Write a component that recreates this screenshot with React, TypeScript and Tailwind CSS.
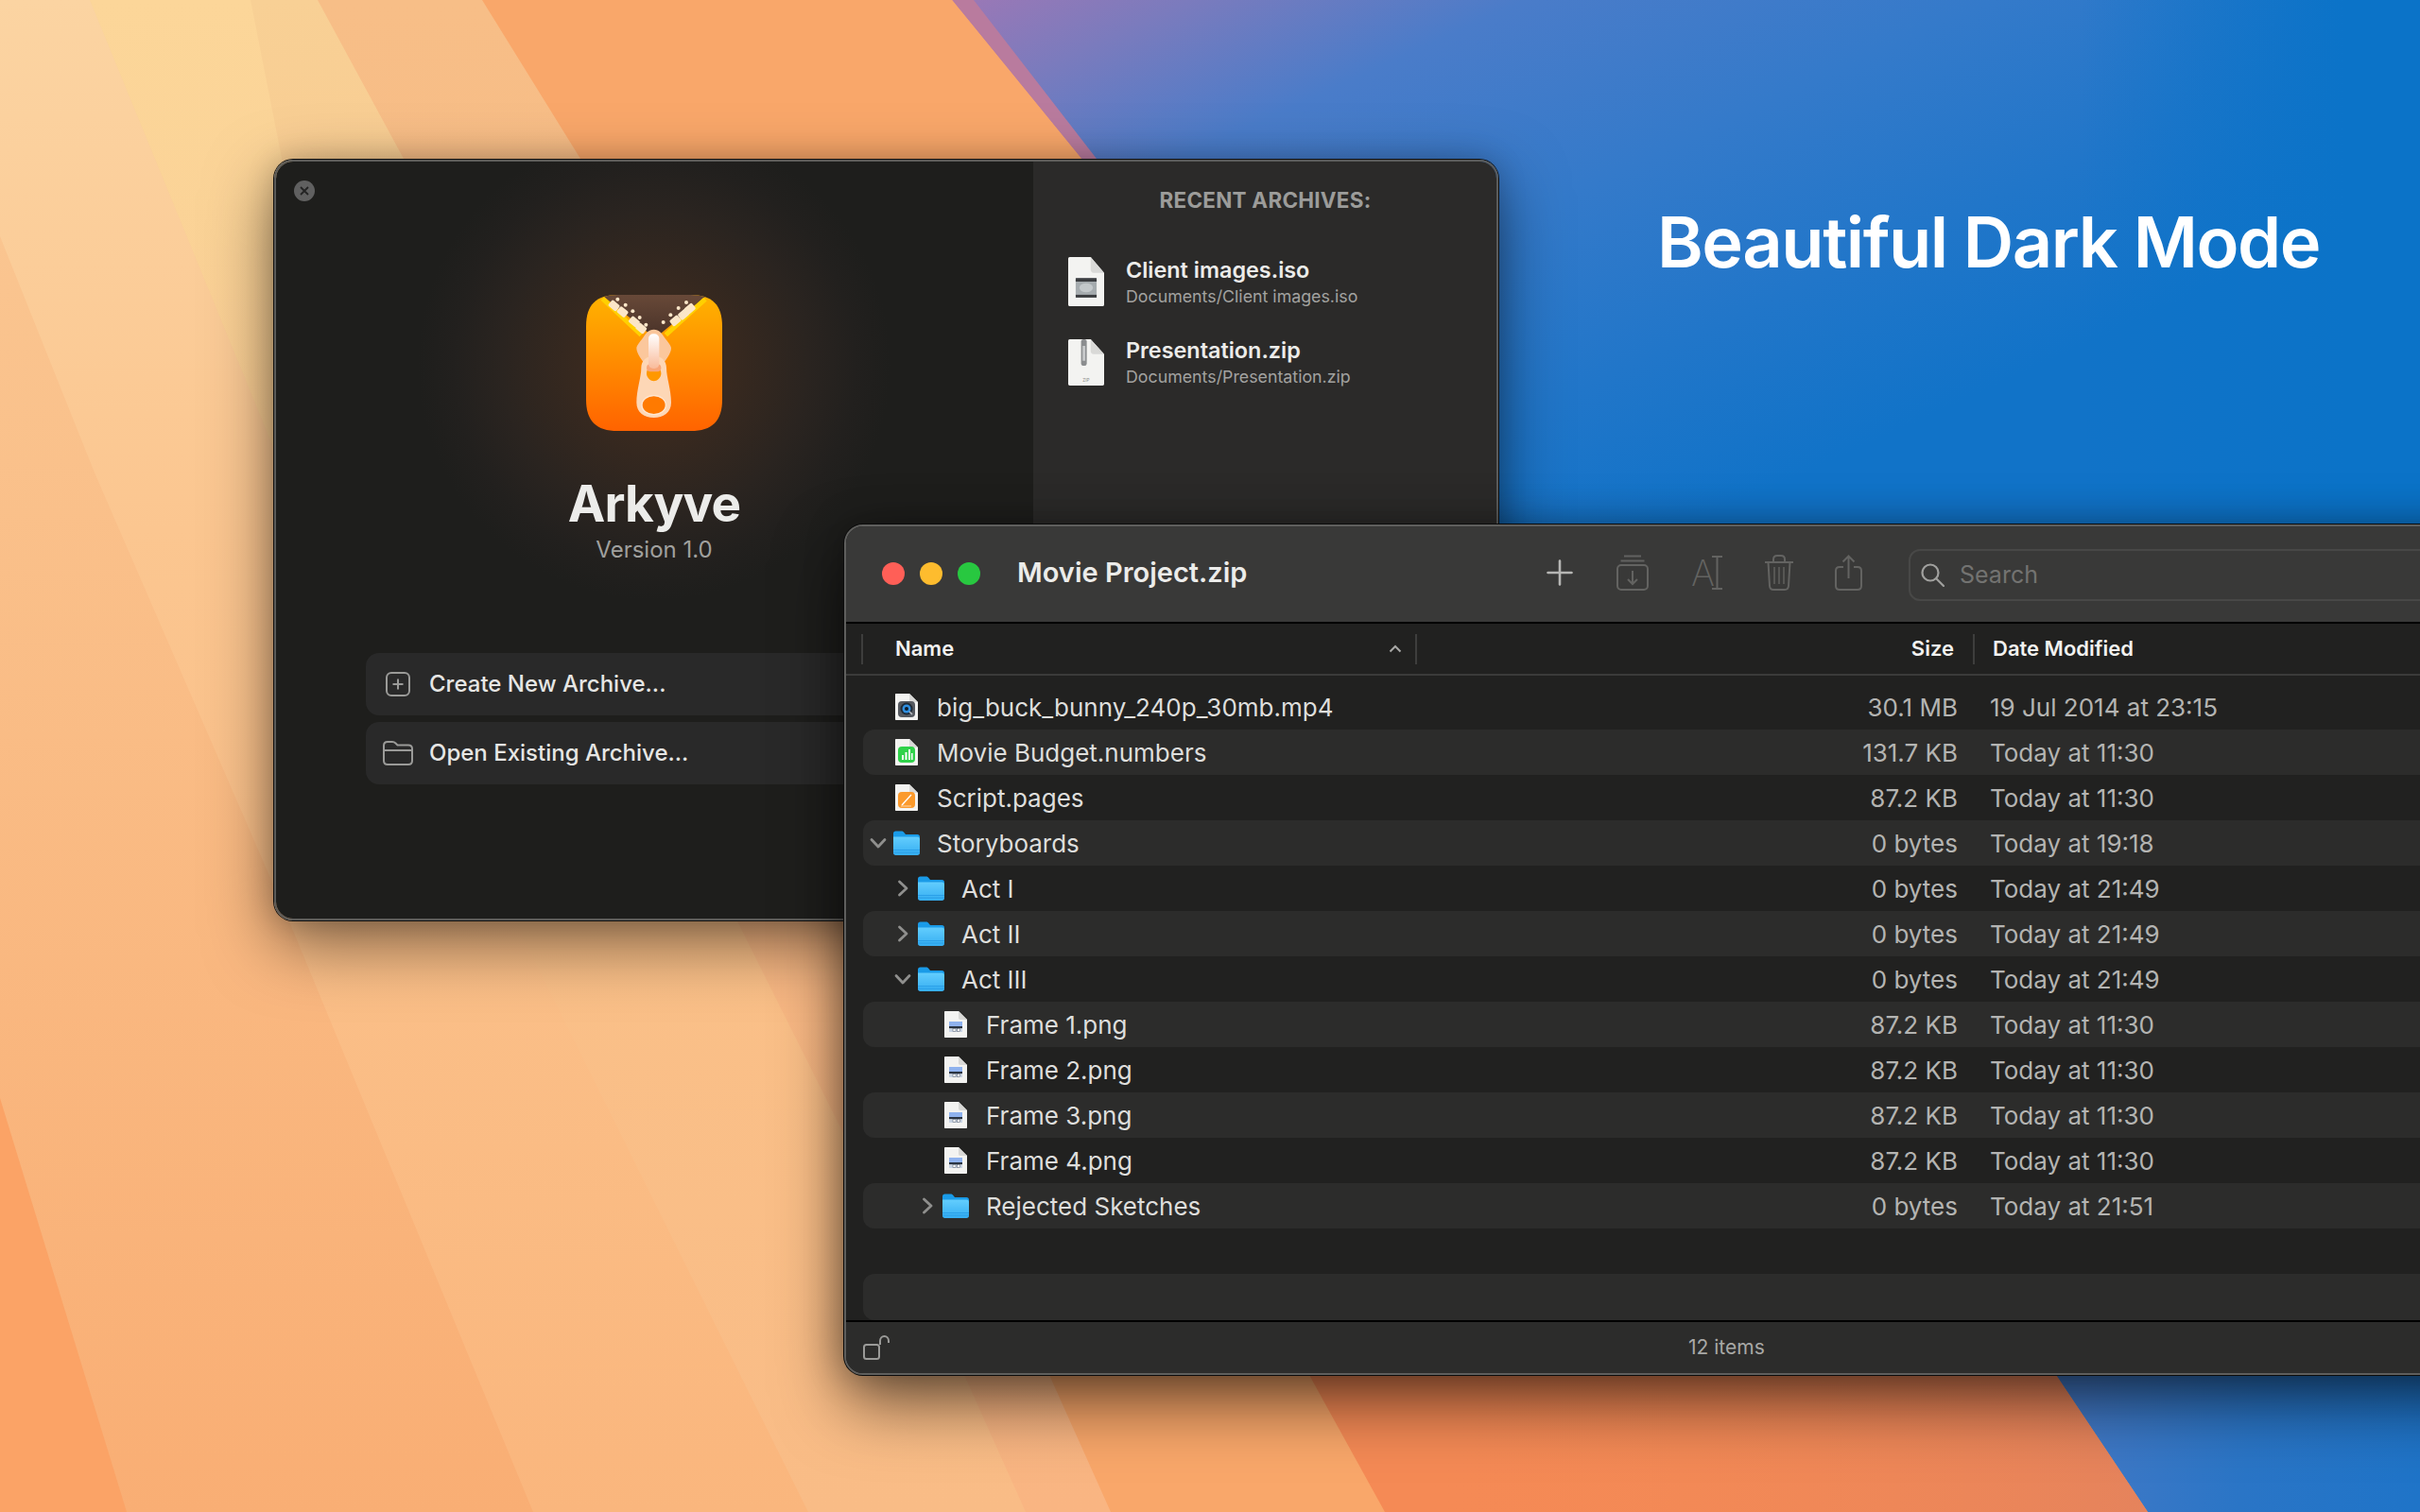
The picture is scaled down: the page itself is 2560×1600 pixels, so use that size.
import type { ReactNode } from 'react';

type Row = {
    name: string;
    size: string;
    date: string;
    kind: 'mp4' | 'numbers' | 'pages' | 'png' | 'folder';
    indent: string;
    open?: boolean;
};

const rows: Row[] = [
    { name: 'big_buck_bunny_240p_30mb.mp4', size: '30.1 MB', date: '19 Jul 2014 at 23:15', kind: 'mp4', indent: 'pl-[34px]' },
    { name: 'Movie Budget.numbers', size: '131.7 KB', date: 'Today at 11:30', kind: 'numbers', indent: 'pl-[34px]' },
    { name: 'Script.pages', size: '87.2 KB', date: 'Today at 11:30', kind: 'pages', indent: 'pl-[34px]' },
    { name: 'Storyboards', size: '0 bytes', date: 'Today at 19:18', kind: 'folder', indent: 'pl-[6px]', open: true },
    { name: 'Act I', size: '0 bytes', date: 'Today at 21:49', kind: 'folder', indent: 'pl-[32px]' },
    { name: 'Act II', size: '0 bytes', date: 'Today at 21:49', kind: 'folder', indent: 'pl-[32px]' },
    { name: 'Act III', size: '0 bytes', date: 'Today at 21:49', kind: 'folder', indent: 'pl-[32px]', open: true },
    { name: 'Frame 1.png', size: '87.2 KB', date: 'Today at 11:30', kind: 'png', indent: 'pl-[86px]' },
    { name: 'Frame 2.png', size: '87.2 KB', date: 'Today at 11:30', kind: 'png', indent: 'pl-[86px]' },
    { name: 'Frame 3.png', size: '87.2 KB', date: 'Today at 11:30', kind: 'png', indent: 'pl-[86px]' },
    { name: 'Frame 4.png', size: '87.2 KB', date: 'Today at 11:30', kind: 'png', indent: 'pl-[86px]' },
    { name: 'Rejected Sketches', size: '0 bytes', date: 'Today at 21:51', kind: 'folder', indent: 'pl-[58px]' },
];

function Wallpaper() {
    return (
        <svg className="absolute inset-0" width="2560" height="1600" viewBox="0 0 2560 1600">
            <defs>
                <linearGradient id="blue" gradientUnits="userSpaceOnUse" x1="1020" y1="0" x2="1365" y2="751">
                    <stop offset="0" stopColor="#9a78b6" />
                    <stop offset="0.12" stopColor="#7b7bbd" />
                    <stop offset="0.3" stopColor="#4a7cc9" />
                    <stop offset="0.55" stopColor="#347aca" />
                    <stop offset="0.78" stopColor="#2176c9" />
                    <stop offset="1" stopColor="#1173c8" />
                </linearGradient>
                <linearGradient id="blueRight" gradientUnits="userSpaceOnUse" x1="2200" y1="0" x2="2480" y2="0">
                    <stop offset="0" stopColor="#0b73c8" stopOpacity="0" />
                    <stop offset="1" stopColor="#0b73c8" />
                </linearGradient>
                <linearGradient id="wedge" gradientUnits="userSpaceOnUse" x1="2200" y1="1500" x2="2560" y2="1560">
                    <stop offset="0" stopColor="#4279c6" />
                    <stop offset="0.5" stopColor="#2a75c6" />
                    <stop offset="1" stopColor="#1f74c8" />
                </linearGradient>
                <linearGradient id="deep" gradientUnits="userSpaceOnUse" x1="0" y1="168" x2="0" y2="1400">
                    <stop offset="0" stopColor="#f8a86c" />
                    <stop offset="1" stopColor="#f58a55" />
                </linearGradient>
                <linearGradient id="deepRight" gradientUnits="userSpaceOnUse" x1="1500" y1="0" x2="2270" y2="0">
                    <stop offset="0" stopColor="#f58a55" stopOpacity="0" />
                    <stop offset="1" stopColor="#e5835c" />
                </linearGradient>
                <linearGradient id="band4" gradientUnits="userSpaceOnUse" x1="0" y1="0" x2="0" y2="1600">
                    <stop offset="0" stopColor="#f7be87" />
                    <stop offset="1" stopColor="#f9b582" />
                </linearGradient>
                <linearGradient id="ridge" gradientUnits="userSpaceOnUse" x1="0" y1="0" x2="0" y2="1600">
                    <stop offset="0" stopColor="#f8d095" />
                    <stop offset="0.6" stopColor="#fac088" />
                    <stop offset="1" stopColor="#f9bc86" />
                </linearGradient>
                <linearGradient id="ridgeTop" gradientUnits="userSpaceOnUse" x1="0" y1="0" x2="0" y2="700">
                    <stop offset="0" stopColor="#fcd699" />
                    <stop offset="1" stopColor="#fcd699" stopOpacity="0" />
                </linearGradient>
                <linearGradient id="left" gradientUnits="userSpaceOnUse" x1="0" y1="0" x2="0" y2="1600">
                    <stop offset="0" stopColor="#fbd4a2" />
                    <stop offset="0.35" stopColor="#fbc690" />
                    <stop offset="1" stopColor="#fab67d" />
                </linearGradient>
                <linearGradient id="left2" gradientUnits="userSpaceOnUse" x1="0" y1="250" x2="0" y2="1600">
                    <stop offset="0" stopColor="#fac590" />
                    <stop offset="1" stopColor="#f9ae74" />
                </linearGradient>
            </defs>
            <rect width="2560" height="1600" fill="url(#blue)" />
            <rect x="2200" width="360" height="1300" fill="url(#blueRight)" />
            <polygon points="2560,1300 2000,1300 2000,1600 2560,1600" fill="url(#wedge)" />
            <polygon points="0,0 1030,0 1160,168 2070,1300 0,1300" fill="#b97b9e" />
            <polygon points="0,0 1007,0 1144,168 2051,1300 2175,1455 2272,1600 0,1600" fill="url(#deep)" />
            <polygon points="1300,1300 2051,1300 2175,1455 2272,1600 1300,1600" fill="url(#deepRight)" />
            <polygon points="0,0 1007,0 1144,168 1385,1455 1465,1600 0,1600" fill="#f9a76a" />
            <polygon points="0,0 510,0 614,168 1110,1455 1175,1600 0,1600" fill="url(#band4)" />
            <polygon points="0,0 336,0 427,168 780,975 1020,1455 1085,1600 0,1600" fill="url(#ridge)" />
            <polygon points="95,0 265,0 344,400 500,800 300,500" fill="url(#ridgeTop)" />
            <polygon points="0,0 95,0 300,500 545,975 855,1600 0,1600" fill="url(#left)" />
            <polygon points="0,250 100,500 306,975 564,1600 0,1600" fill="url(#left2)" />
            <polygon points="0,1162 134,1600 0,1600" fill="#fba366" />
        </svg>
    );
}

function AppIcon() {
    const squircle = 'M130 38H362C430 38 462 70 462 138V370C462 438 430 470 362 470H130C62 470 30 438 30 370V138C30 70 62 38 130 38Z';
    return (
        <svg width="144" height="144" viewBox="30 38 432 432">
            <defs>
                <linearGradient id="appFill" x1="0" y1="0" x2="0" y2="1">
                    <stop offset="0" stopColor="#ffb300" />
                    <stop offset="1" stopColor="#ff6300" />
                </linearGradient>
                <linearGradient id="appTop" x1="0" y1="0" x2="0" y2="1">
                    <stop offset="0" stopColor="#6a4a39" />
                    <stop offset="1" stopColor="#4a3329" />
                </linearGradient>
                <linearGradient id="appHandle" x1="0" y1="0" x2="0" y2="1">
                    <stop offset="0" stopColor="#ffffff" />
                    <stop offset="1" stopColor="#f9bb9a" />
                </linearGradient>
                <clipPath id="appClip">
                    <path d={squircle} />
                </clipPath>
            </defs>
            <path d={squircle} fill="url(#appFill)" />
            <g clipPath="url(#appClip)">
                <polygon points="70,30 235,165 262,165 425,30" fill="url(#appTop)" />
                <path d="M82 50L205 165M408 52L283 165" stroke="#ffd000" strokeWidth="15" />
                <g fill="#fbe6c8">
                    <rect x="102" y="60" width="32" height="24" rx="5" transform="rotate(40 118 73)" />
                    <rect x="129" y="80" width="32" height="24" rx="5" transform="rotate(40 145 93)" />
                    <rect x="166" y="111" width="32" height="24" rx="5" transform="rotate(40 182 124)" />
                    <rect x="188" y="132" width="32" height="24" rx="5" transform="rotate(40 204 145)" />
                    <rect x="344" y="70" width="32" height="24" rx="5" transform="rotate(-40 360 83)" />
                    <rect x="324" y="88" width="32" height="24" rx="5" transform="rotate(-40 340 101)" />
                    <rect x="298" y="108" width="32" height="24" rx="5" transform="rotate(-40 314 121)" />
                    <circle cx="130" cy="52" r="6" />
                    <circle cx="155" cy="70" r="6" />
                    <circle cx="178" cy="90" r="6" />
                    <circle cx="200" cy="110" r="6" />
                    <circle cx="220" cy="133" r="6" />
                    <circle cx="348" cy="62" r="6" />
                    <circle cx="323" cy="80" r="6" />
                    <circle cx="298" cy="102" r="6" />
                    <circle cx="275" cy="125" r="6" />
                </g>
            </g>
            <path d="M245 148C262 148 270 160 278 172C292 190 300 200 300 207C300 225 285 240 272 262H218C205 240 190 225 190 207C190 200 198 190 212 172C220 160 228 148 245 148Z" fill="#fbc79c" />
            <path d="M245 232C270 232 285 248 285 270C285 300 300 340 300 380C300 412 275 428 245 428C215 428 190 412 190 380C190 340 205 300 205 270C205 248 220 232 245 232Z" fill="#fdd7b6" />
            <path d="M245 265C258 265 268 272 268 288C268 302 255 312 245 312C235 312 222 302 222 288C222 272 232 265 245 265Z" fill="#ff9800" />
            <ellipse cx="245" cy="388" rx="38" ry="30" fill="#ff7a00" stroke="#ffe7d2" strokeWidth="4" />
            <rect x="222" y="258" width="46" height="24" rx="12" fill="#f8a67a" />
            <rect x="228" y="162" width="34" height="110" rx="15" fill="url(#appHandle)" />
        </svg>
    );
}

function Page({ w, h, children }: { w: number; h: number; children?: ReactNode }) {
    return (
        <svg width={w} height={h} viewBox="0 0 24 28" preserveAspectRatio="none" className="shrink-0">
            <path d="M0 1C0 .4.4 0 1 0H15L24 9V27C24 27.6 23.6 28 23 28H1C.4 28 0 27.6 0 27Z" fill="#f3f3f1" />
            <path d="M15 0L24 9H17C15.8 9 15 8.2 15 7Z" fill="#d9d9d7" />
            {children}
        </svg>
    );
}

function FileIcon({ kind }: { kind: Row['kind'] }) {
    if (kind === 'mp4') {
        return (
            <Page w={24} h={28}>
                <rect x="3" y="8" width="18" height="17" rx="4" fill="#55595f" />
                <circle cx="12" cy="16" r="6.5" fill="#1f2a36" />
                <circle cx="12" cy="16" r="4.5" fill="#2f8fe0" />
                <circle cx="12" cy="16" r="2" fill="#0f1b28" />
                <path d="M15 19l3 3" stroke="#b8bcc2" strokeWidth="1.6" />
            </Page>
        );
    }
    if (kind === 'numbers') {
        return (
            <Page w={24} h={28}>
                <rect x="3" y="8" width="18" height="17" rx="4" fill="#2fd24a" />
                <path d="M7 17h2v5H7zM10.5 14h2v8h-2zM14 11h2v11h-2zM17 15h1.5v7H17z" fill="#fff" />
            </Page>
        );
    }
    if (kind === 'pages') {
        return (
            <Page w={24} h={28}>
                <rect x="3" y="8" width="18" height="17" rx="4" fill="#fb9a2c" />
                <path d="M7 22L17 11" stroke="#fff" strokeWidth="1.4" />
                <path d="M6 23h11" stroke="#ffd9ad" strokeWidth="1" />
            </Page>
        );
    }
    return (
        <Page w={24} h={28}>
            <rect x="5" y="11" width="14" height="6" fill="#8fb2ee" />
            <rect x="5" y="16" width="14" height="2.4" fill="#2a3442" />
            <rect x="5" y="18.4" width="14" height="3.6" fill="#c9d4e4" />
            <rect x="9" y="18.5" width="3" height="3" fill="#f7f7f7" stroke="#4a5566" strokeWidth=".5" />
            <rect x="13.5" y="18.5" width="3" height="3" fill="#f7f7f7" stroke="#4a5566" strokeWidth=".5" />
        </Page>
    );
}

function FolderIcon() {
    return (
        <svg width="28" height="26" viewBox="0 0 28 26" className="shrink-0">
            <defs>
                <linearGradient id="folderBody" x1="0" y1="0" x2="0" y2="1">
                    <stop offset="0" stopColor="#63cdfd" />
                    <stop offset="1" stopColor="#35aef2" />
                </linearGradient>
            </defs>
            <path d="M0 3C0 1.4 1 .5 2.5 .5H8.5C10 .5 10.8 1.2 11.6 2.2L13 4H25.5C27 4 28 5 28 6.5V10H0Z" fill="#1a9be8" />
            <path d="M0 6.5H25.5C27 6.5 28 7.5 28 9V23.5C28 25 27 26 25.5 26H2.5C1 26 0 25 0 23.5Z" fill="url(#folderBody)" />
            <path d="M0 20.5H28M0 23H28" stroke="#1f95e2" strokeWidth=".7" />
        </svg>
    );
}

function Chevron({ open }: { open?: boolean }) {
    return (
        <svg width="20" height="20" viewBox="0 0 20 20" className="shrink-0">
            <path
                d={open ? 'M3 6.5L10 14L17 6.5' : 'M6.5 3L14 10L6.5 17'}
                fill="none"
                stroke="#8f8f8d"
                strokeWidth="2.8"
                strokeLinecap="round"
                strokeLinejoin="round"
            />
        </svg>
    );
}

function ListRow({ row, striped }: { row: Row; striped: boolean }) {
    return (
        <div className={`flex h-[48px] items-center rounded-[12px] ${striped ? 'bg-[#2c2c2b]' : ''}`}>
            <div className={`flex w-[584px] items-center ${row.indent}`}>
                {row.kind === 'folder' ? (
                    <>
                        <Chevron open={row.open} />
                        <span className="ml-[6px]">
                            <FolderIcon />
                        </span>
                        <span className="ml-[18px]">{row.name}</span>
                    </>
                ) : (
                    <>
                        <FileIcon kind={row.kind} />
                        <span className="ml-[20px]">{row.name}</span>
                    </>
                )}
            </div>
            <div className="w-[574px] text-right text-[#b4b4b2]">{row.size}</div>
            <div className="ml-[34px] text-[#b4b4b2]">{row.date}</div>
        </div>
    );
}

function RecentItem({ title, path, icon }: { title: string; path: string; icon: ReactNode }) {
    return (
        <div className="flex h-[52px] items-center">
            {icon}
            <div className="ml-[23px] flex flex-col">
                <span className="text-[23.4px] leading-[30px] font-semibold text-[#ececea]">{title}</span>
                <span className="text-[17.8px] leading-[25px] text-[#a2a2a0]">{path}</span>
            </div>
        </div>
    );
}

function ActionButton({ icon, label }: { icon: ReactNode; label: string }) {
    return (
        <div className="flex h-[66px] items-center rounded-[14px] bg-[#292929]">
            <span className="flex w-[67px] justify-center">{icon}</span>
            <span className="text-[24px] font-medium text-[#e6e6e4]">{label}</span>
        </div>
    );
}

function WelcomeWindow() {
    return (
        <div className="absolute top-[169px] left-[290px] flex h-[805px] w-[1295px] overflow-hidden rounded-[20px] border-2 border-[#5b5b59] shadow-[0_0_0_1px_#111,0_24px_70px_rgba(0,0,0,0.5),0_0_30px_rgba(0,0,0,0.18)]">
            <div className="relative flex w-[801px] flex-col items-center bg-[#1e1e1c] pt-[141px]">
                <div className="absolute top-[-36px] left-[150px] h-[500px] w-[500px] bg-[radial-gradient(circle_closest-side,#3d2c20_0%,#38291f_32%,#2a2420_65%,#22201e_85%,rgba(30,30,28,0)_100%)]" />
                <div className="absolute top-[20px] left-[19px] flex h-[22px] w-[22px] items-center justify-center rounded-full bg-[#606060]">
                    <svg width="12" height="12" viewBox="0 0 12 12">
                        <path d="M2 2L10 10M10 2L2 10" stroke="#232323" strokeWidth="1.8" />
                    </svg>
                </div>
                <div className="relative flex flex-col items-center pr-[1px]">
                    <AppIcon />
                    <div className="mt-[44px] text-[53px] leading-[66px] font-bold tracking-[-0.015em] text-[#ececea]">Arkyve</div>
                    <div className="text-[24px] leading-[32px] text-[#a0a09e]">Version 1.0</div>
                </div>
                <div className="relative mt-[93px] flex flex-col gap-[7px] self-stretch pr-[96px] pl-[95px]">
                    <ActionButton
                        label="Create New Archive..."
                        icon={
                            <svg width="26" height="26" viewBox="0 0 26 26" fill="none" stroke="#9a9a98" strokeWidth="2">
                                <rect x="1" y="1" width="24" height="24" rx="5" />
                                <path d="M13 7.5V18.5M7.5 13H18.5" />
                            </svg>
                        }
                    />
                    <ActionButton
                        label="Open Existing Archive..."
                        icon={
                            <svg width="32" height="26" viewBox="0 0 32 26" fill="none" stroke="#9a9a98" strokeWidth="2">
                                <path d="M1 5C1 2.5 2.5 1 5 1H10C11.5 1 12.5 1.5 13.5 2.5L15.5 4.5H27C29.5 4.5 31 6 31 8.5V21C31 23.5 29.5 25 27 25H5C2.5 25 1 23.5 1 21Z" />
                                <path d="M1 10H31" />
                            </svg>
                        }
                    />
                </div>
            </div>
            <div className="flex flex-1 flex-col bg-[#2b2a29] pl-[37px]">
                <div className="mt-[27px] w-[417px] text-center text-[22.5px] leading-[28px] font-bold tracking-[0.01em] text-[#9c9c9a]">
                    RECENT ARCHIVES:
                </div>
                <div className="mt-[46px] flex flex-col gap-[33px]">
                    <RecentItem
                        title="Client images.iso"
                        path="Documents/Client images.iso"
                        icon={
                            <Page w={38} h={52}>
                                <rect x="5" y="12" width="14" height="11" rx="1" fill="#a5abae" />
                                <rect x="5" y="12" width="14" height="2" fill="#3b3d40" />
                                <rect x="5" y="21.5" width="14" height="1.6" fill="#3b3d40" />
                                <ellipse cx="12" cy="17.5" rx="4.5" ry="2.6" fill="#c3c8ca" />
                            </Page>
                        }
                    />
                    <RecentItem
                        title="Presentation.zip"
                        path="Documents/Presentation.zip"
                        icon={
                            <Page w={38} h={49}>
                                <rect x="8.6" y="0" width="3.8" height="16" rx="1.6" fill="#8b8d8f" />
                                <rect x="9.6" y="4" width="1.8" height="9" fill="#c7c9ca" />
                                <text x="12" y="26" textAnchor="middle" fontSize="3" fill="#8a8a88" fontFamily="Inter, sans-serif">
                                    ZIP
                                </text>
                            </Page>
                        }
                    />
                </div>
            </div>
        </div>
    );
}

function Toolbar() {
    const dim = '#636361';
    return (
        <div className="flex shrink-0 items-center pb-[2px]">
            <svg width="28" height="28" viewBox="0 0 28 28" stroke="#b6b6b4" strokeWidth="2.6" strokeLinecap="round">
                <path d="M14 1.5V26.5M1.5 14H26.5" />
            </svg>
            <svg width="34" height="38" viewBox="0 0 34 38" fill="none" stroke={dim} strokeWidth="2" className="ml-[46px]">
                <path d="M8 1.5H26M4.5 6.5H29.5" />
                <rect x="1" y="11" width="32" height="26" rx="4" />
                <path d="M17 17V31M12 26L17 31L22 26" />
            </svg>
            <div className="ml-[45px] flex h-[38px] w-[33px] items-center text-[#636361]">
                <span className="w-[22px] text-[38px] leading-[38px] font-extralight">A</span>
                <svg width="11" height="36" viewBox="0 0 11 36" fill="none" stroke={dim} strokeWidth="2">
                    <path d="M0 1H11M0 35H11M5.5 1V35" />
                </svg>
            </div>
            <svg width="32" height="38" viewBox="0 0 32 38" fill="none" stroke={dim} strokeWidth="2" className="ml-[44px]">
                <path d="M1 8H31M10 8V5C10 2.5 11.5 1 14 1H18C20.5 1 22 2.5 22 5V8" />
                <path d="M4.5 8L6 33C6.2 35.5 7.5 37 10 37H22C24.5 37 25.8 35.5 26 33L27.5 8" />
                <path d="M11 13V31M16 13V31M21 13V31" strokeWidth="1.4" />
            </svg>
            <svg width="29" height="38" viewBox="0 0 29 38" fill="none" stroke={dim} strokeWidth="2" className="ml-[43px]">
                <path d="M9 13H5C2.5 13 1 14.5 1 17V33C1 35.5 2.5 37 5 37H24C26.5 37 28 35.5 28 33V17C28 14.5 26.5 13 24 13H20" />
                <path d="M14.5 25V1.5M8.5 7.5L14.5 1.5L20.5 7.5" />
            </svg>
            <div className="mt-[6px] ml-[49px] flex h-[55px] w-[800px] items-center rounded-[12px] border-2 border-[#484847] pl-[11px] text-[25px] text-[#737371]">
                <svg width="25" height="25" viewBox="0 0 25 25" fill="none" stroke="#a0a09e" strokeWidth="2.2" strokeLinecap="round">
                    <circle cx="10" cy="10" r="8.5" />
                    <path d="M16.5 16.5L24 24" />
                </svg>
                <span className="ml-[16px]">Search</span>
            </div>
        </div>
    );
}

function ArchiveWindow() {
    return (
        <div className="absolute top-[555px] left-[893px] flex h-[900px] w-[1800px] flex-col overflow-hidden rounded-[20px] border-2 border-[#5f5f5d] bg-[#212120] shadow-[0_0_0_1px_#0c0c0c,0_30px_70px_rgba(0,0,0,0.55),0_0_40px_rgba(0,0,0,0.3)]">
            <div className="flex h-[103px] shrink-0 items-center border-b-2 border-black bg-[#393938] pb-[2px] pl-[38px]">
                <div className="flex shrink-0 gap-[16px]">
                    <span className="h-[24px] w-[24px] rounded-full bg-[#ff5f57]" />
                    <span className="h-[24px] w-[24px] rounded-full bg-[#febc2e]" />
                    <span className="h-[24px] w-[24px] rounded-full bg-[#28c840]" />
                </div>
                <div className="ml-[39px] w-[560px] shrink-0 pb-[2px] text-[29px] font-semibold text-[#ececea]">Movie Project.zip</div>
                <Toolbar />
            </div>
            <div className="flex h-[55px] shrink-0 items-center border-b-2 border-[#3b3b3a] pl-[16px] text-[22px] font-semibold text-[#f2f2f0]">
                <span className="h-[32px] w-[2px] bg-[#3e3e3d]" />
                <div className="flex w-[584px] items-center justify-between pr-[14px] pl-[34px]">
                    <span>Name</span>
                    <svg width="14" height="9" viewBox="0 0 14 9" fill="none" stroke="#a8a8a6" strokeWidth="2">
                        <path d="M1.5 7.5L7 2L12.5 7.5" />
                    </svg>
                </div>
                <span className="h-[32px] w-[2px] bg-[#3e3e3d]" />
                <div className="w-[568px] text-right">Size</div>
                <span className="ml-[20px] h-[32px] w-[2px] bg-[#3e3e3d]" />
                <div className="ml-[19px]">Date Modified</div>
            </div>
            <div className="flex-1 pt-[9px] pl-[18px] text-[26px] text-[#dededc]">
                {rows.map((row, i) => (
                    <ListRow key={row.name} row={row} striped={i % 2 === 1} />
                ))}
                <div className="h-[48px]" />
                <div className="h-[49px] rounded-[12px] bg-[#2c2c2b]" />
            </div>
            <div className="relative flex h-[56px] shrink-0 items-center border-t-2 border-black bg-[#2c2c2b] pl-[18px]">
                <svg width="28" height="26" viewBox="0 0 28 26" fill="none" stroke="#9a9a98" strokeWidth="2">
                    <rect x="1" y="10" width="16" height="15" rx="2.5" />
                    <path d="M18 10V6C18 3 20 1 22.5 1C25 1 27 3 27 6V8" />
                </svg>
                <span className="ml-[845px] text-[21px] text-[#a8a8a6]">12 items</span>
            </div>
        </div>
    );
}

export default function App() {
    return (
        <div className="relative h-[1600px] w-[2560px] overflow-hidden font-['Inter',sans-serif]">
            <Wallpaper />
            <WelcomeWindow />
            <ArchiveWindow />
            <div className="absolute top-[210px] left-[1753px] text-[74px] leading-[92px] font-semibold tracking-[-0.02em] text-white">
                Beautiful Dark Mode
            </div>
        </div>
    );
}
